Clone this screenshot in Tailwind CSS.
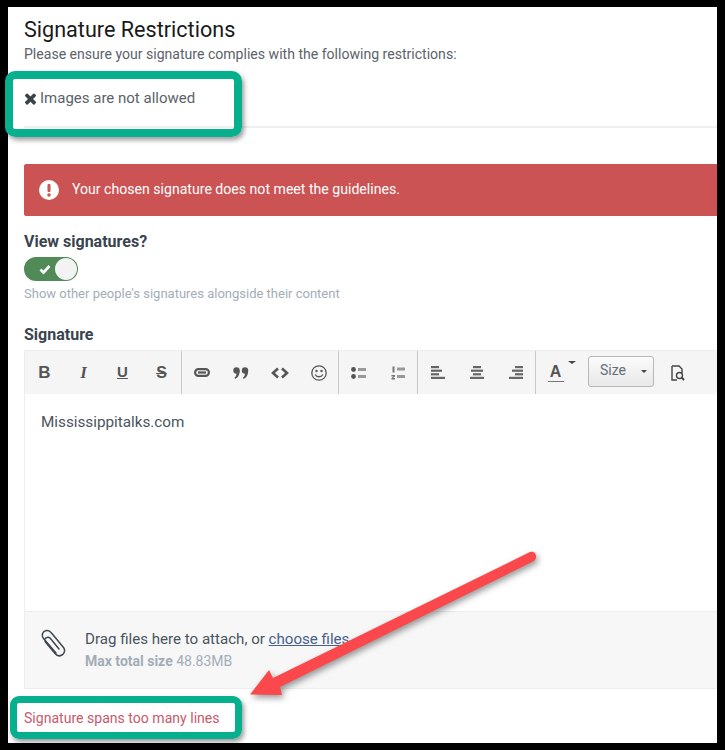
<!doctype html>
<html lang="en">
<head>
<meta charset="utf-8">
<title>Signature Restrictions</title>
<script src="https://cdn.jsdelivr.net/npm/@tailwindcss/browser@4"></script>
</head>
<body class="bg-black font-['Roboto',sans-serif]">
<div class="relative w-[725px] h-[750px] bg-black overflow-hidden">
  <div class="absolute left-[8px] top-[7px] w-[709px] h-[736px] bg-white overflow-hidden pl-[16px] text-[#3f4a55]">
    <h1 class="text-[21.6px] leading-[26px] mt-[10px] text-[#1a1a1a]">Signature Restrictions</h1>
    <p class="text-[14.07px] leading-[20px] mt-[1px] text-[#5b6269]">Please ensure your signature complies with the following restrictions:</p>
    <div class="flex items-center gap-[3px] mt-[24px] text-[15px] leading-[20px] text-[#5b6269]">
      <svg class="w-[13px] h-[13px] text-[#3a424a]" viewBox="200 200 1392 1392" fill="currentColor"><path d="M1490 1322q0 40-28 68l-136 136q-28 28-68 28t-68-28l-294-294-294 294q-28 28-68 28t-68-28l-136-136q-28-28-28-68t28-68l294-294-294-294q-28-28-28-68t28-68l136-136q28-28 68-28t68 28l294 294 294-294q28-28 68-28t68 28l136 136q28 28 28 68t-28 68l-294 294 294 294q28 28 28 68z"/></svg>
      <span>Images are not allowed</span>
    </div>
    <div class="h-[2px] bg-[#f0f0f0] mt-[18px]"></div>

    <div class="w-[720px] h-[52px] mt-[36px] bg-[#cb5353] rounded-[2px] flex items-center pl-[15px] gap-[13px] text-white text-[14.1px]">
      <svg class="w-[20px] h-[20px]" viewBox="0 0 20 20"><circle cx="10" cy="10" r="10" fill="#fff"/><rect x="8.5" y="4" width="3" height="8" rx="1" fill="#cb5353"/><circle cx="10" cy="15" r="1.8" fill="#cb5353"/></svg>
      <span class="-mt-[1px]">Your chosen signature does not meet the guidelines.</span>
    </div>

    <div class="mt-[15px] text-[16px] leading-[21px] font-bold text-[#3a444e]">View signatures?</div>
    <div class="mt-[5px] w-[54px] h-[24px] rounded-full bg-[#4f8a57] flex items-center justify-between pl-[15px] pr-[1px]">
      <svg class="w-[12px] h-[12px] text-white" viewBox="0 0 12 12" fill="none" stroke="currentColor" stroke-width="2.6"><path d="M1.5 6.5 L4.5 9.5 L10.5 3"/></svg>
      <span class="w-[22px] h-[22px] rounded-full bg-[#f3f3f3]"></span>
    </div>
    <p class="mt-[4px] text-[13px] leading-[18px] text-[#a3adb8]">Show other people's signatures alongside their content</p>

    <div class="mt-[22px] text-[16px] leading-[20px] font-bold text-[#3a444e]">Signature</div>

    <div class="mt-[5px] w-[720px] border border-[#ededed]">
      <div class="h-[43px] bg-[#f5f5f5] flex text-[#555]">
        <div class="flex border-r border-[#c8c8c8]">
          <span class="w-[39px] flex items-center justify-center text-[17px] font-bold font-['Liberation_Sans',sans-serif]">B</span>
          <span class="w-[39px] flex items-center justify-center text-[17px] font-bold italic font-['Liberation_Serif',serif]">I</span>
          <span class="w-[39px] flex items-center justify-center text-[15px] font-bold underline font-['Liberation_Sans',sans-serif]">U</span>
          <span class="w-[39px] flex items-center justify-center text-[16px] font-bold line-through font-['Liberation_Sans',sans-serif]">S</span>
        </div>
        <div class="flex border-r border-[#c8c8c8]">
          <span class="w-[39px] flex items-center justify-center">
            <svg class="w-[16px] h-[9px]" viewBox="0 0 16 9" fill="none" stroke="#555" stroke-width="2.2"><rect x="1.1" y="1.1" width="13.8" height="6.8" rx="3.4"/><path d="M4 4.5h8"/></svg>
          </span>
          <span class="w-[39px] flex items-center justify-center">
            <svg class="w-[16px] h-[12px]" viewBox="0 0 16 12" fill="#555"><circle cx="3.5" cy="3.5" r="3.2"/><path d="M6.7 3.5 C6.7 8 5 10.5 2 12 L1.5 10.5 C3 9.5 3.5 8 3.5 6.5z"/><circle cx="12" cy="3.5" r="3.2"/><path d="M15.2 3.5 C15.2 8 13.5 10.5 10.5 12 L10 10.5 C11.5 9.5 12 8 12 6.5z"/></svg>
          </span>
          <span class="w-[39px] flex items-center justify-center">
            <svg class="w-[18px] h-[12px]" viewBox="0 0 18 12" fill="none" stroke="#555" stroke-width="2.6"><path d="M7 1.5 L2 6 L7 10.5"/><path d="M11 1.5 L16 6 L11 10.5"/></svg>
          </span>
          <span class="w-[39px] flex items-center justify-center">
            <svg class="w-[16px] h-[16px]" viewBox="0 0 16 16" fill="none" stroke="#555" stroke-width="1.3"><circle cx="8" cy="8" r="7.2"/><circle cx="5.5" cy="6" r="1.2" fill="#555" stroke="none"/><circle cx="10.5" cy="6" r="1.2" fill="#555" stroke="none"/><path d="M4.2 9.5 C5.5 12.5 10.5 12.5 11.8 9.5"/></svg>
          </span>
        </div>
        <div class="flex border-r border-[#c8c8c8]">
          <span class="w-[39px] flex items-center justify-center">
            <svg class="w-[15px] h-[12px]" viewBox="0 0 15 12"><circle cx="2.5" cy="2.5" r="2.4" fill="#555"/><circle cx="2.5" cy="9.5" r="2.4" fill="#555"/><rect x="7" y="1" width="8" height="3" fill="#999"/><rect x="7" y="8" width="8" height="3" fill="#999"/></svg>
          </span>
          <span class="w-[39px] flex items-center justify-center">
            <svg class="w-[14px] h-[14px]" viewBox="0 0 14 14"><rect x="1.5" y="0.5" width="2" height="6" fill="#777"/><path d="M0.5 9h3.5v1.5l-2 1.5h2v1.5h-3.5v-1.5l2-1.5h-2z" fill="#777"/><rect x="6" y="1.5" width="8" height="3" fill="#999"/><rect x="6" y="9" width="8" height="3" fill="#999"/></svg>
          </span>
        </div>
        <div class="flex border-r border-[#c8c8c8]">
          <span class="w-[39px] flex items-center justify-center">
            <svg class="w-[14px] h-[13px]" viewBox="0 0 14 13" fill="#666"><rect y="0" width="8" height="2.2"/><rect y="3.6" width="11" height="2.2"/><rect y="7.2" width="8" height="2.2"/><rect y="10.8" width="14" height="2.2"/></svg>
          </span>
          <span class="w-[39px] flex items-center justify-center">
            <svg class="w-[14px] h-[13px]" viewBox="0 0 14 13" fill="#666"><rect x="3" y="0" width="8" height="2.2"/><rect x="1" y="3.6" width="12" height="2.2"/><rect x="3" y="7.2" width="8" height="2.2"/><rect y="10.8" width="14" height="2.2"/></svg>
          </span>
          <span class="w-[39px] flex items-center justify-center">
            <svg class="w-[14px] h-[13px]" viewBox="0 0 14 13" fill="#666"><rect x="6" y="0" width="8" height="2.2"/><rect x="3" y="3.6" width="11" height="2.2"/><rect x="6" y="7.2" width="8" height="2.2"/><rect y="10.8" width="14" height="2.2"/></svg>
          </span>
        </div>
        <div class="flex items-center">
          <span class="relative w-[39px] flex flex-col items-center justify-center">
            <span class="text-[16px] leading-[17px] font-bold text-[#555] font-['Liberation_Sans',sans-serif]">A</span>
            <span class="w-[16px] h-[1px] mt-[1px] bg-[#777]"></span>
            <span class="absolute right-[-1px] top-[-2px] border-x-[4px] border-t-[3px] border-x-transparent border-t-[#444]"></span>
          </span>
          <span class="ml-[13px] -mt-[2px] w-[66px] h-[31px] rounded-[3px] border border-[#b8b8b8] bg-gradient-to-b from-[#fbfbfb] to-[#e8e8e8] flex items-center pl-[11px] pr-[6px] justify-between text-[14px] text-[#66707a]">
            <span class="-mt-[3px]">Size</span>
            <span class="border-x-[3px] border-t-[3px] border-x-transparent border-t-[#444]"></span>
          </span>
          <span class="ml-[17px]">
            <svg class="w-[14px] h-[16px]" viewBox="0 0 14 16" fill="none" stroke="#444" stroke-width="1.4"><path d="M1 1h7l3 3v4M1 1v14h5"/><circle cx="8.5" cy="10.5" r="3"/><path d="M10.8 12.8 L13 15" stroke-width="2"/></svg>
          </span>
        </div>
      </div>
      <div class="h-[217px] pl-[16px] pt-[18px] text-[15.25px] leading-[20px] text-[#4a545e]">Mississippitalks.com</div>
      <div class="h-[77px] border-t border-[#ededed] bg-[#f7f7f7] flex pl-[14px] pt-[17px] gap-[19px]">
        <svg class="w-[27px] h-[29px] text-[#3e4650]" viewBox="0 0 27 29" fill="none" stroke="currentColor" stroke-width="1.5" stroke-linecap="round"><path d="M17 24 L4.5 9.5 C2 6 4 2.5 6.5 1.8 C9 1 11 2 12.5 4 L24.5 18.5 C26.5 21 25.5 24.5 23 26 C20.5 27.5 18 27 16 24.5 L6.5 13 C5.5 11.5 6 9.5 7 8.8 C8.5 8 10 8 11.5 9.5 L20 20"/></svg>
        <div class="-mt-[1px]">
          <p class="text-[15.1px] leading-[22px] text-[#4a545e]">Drag files here to attach, or <a class="text-[#46608c] underline">choose files</a></p>
          <p class="text-[14px] leading-[20px] text-[#a3adb8] mt-[1px]"><b>Max total size</b> 48.83MB</p>
        </div>
      </div>
    </div>
    <p class="mt-[19px] text-[14.07px] leading-[20px] text-[#c8596a]">Signature spans too many lines</p>
  </div>

  <!-- annotations over the screenshot -->
  <div class="absolute left-[5px] top-[71px] w-[237px] h-[66px] border-[8px] border-[#06b08f] rounded-[10px] shadow-[2px_3px_5px_rgba(0,0,0,0.4)]"></div>
  <div class="absolute left-[10px] top-[696px] w-[232px] h-[43px] border-[7px] border-[#06b08f] rounded-[9px] shadow-[2px_3px_5px_rgba(0,0,0,0.4)]"></div>
  <svg class="absolute left-0 top-0 w-[725px] h-[750px] drop-shadow-[2px_3px_3px_rgba(0,0,0,0.4)]" viewBox="0 0 725 750" fill="#fb484c">
    <path d="M250 694.5 L269 670 L273 678 L530 552 C536 550 538 558 534 561 L280 687 L282 695 Z"/>
  </svg>
</div>
</body>
</html>
